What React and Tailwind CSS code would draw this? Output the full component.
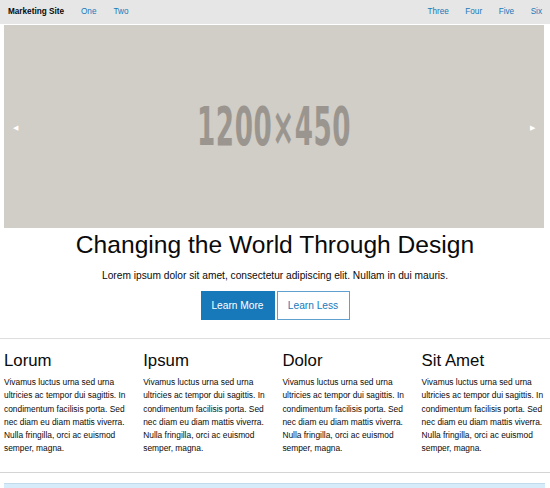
import React from 'react'

const leftLinks = ['One', 'Two']
const rightLinks = ['Three', 'Four', 'Five', 'Six']

const columns = ['Lorum', 'Ipsum', 'Dolor', 'Sit Amet']

const body =
  'Vivamus luctus urna sed urna ultricies ac tempor dui sagittis. In condimentum facilisis porta. Sed nec diam eu diam mattis viverra. Nulla fringilla, orci ac euismod semper, magna.'

const App = () => {
  return (
    <div className="w-full min-h-screen bg-white text-[#0a0a0a] font-['Liberation_Sans',Arial,sans-serif] overflow-hidden">
      {/* top bar */}
      <nav className="h-[24px] bg-[#e6e6e6] flex items-center justify-between px-[8px] text-[8.2px]">
        <div className="flex items-center gap-[17px]">
          <span className="font-bold">Marketing Site</span>
          {leftLinks.map((l) => (
            <a key={l} href="#" className="text-[#1779ba]">{l}</a>
          ))}
        </div>
        <div className="flex items-center gap-[16.5px]">
          {rightLinks.map((l) => (
            <a key={l} href="#" className="text-[#1779ba]">{l}</a>
          ))}
        </div>
      </nav>

      {/* orbit slider */}
      <div className="relative mt-px ml-[4px] mr-[6px] h-[203px] bg-[#d1cdc7] flex items-center justify-center">
        <span className="text-[53px] leading-none font-bold text-[#9a968f] scale-x-[0.55] font-['DejaVu_Sans_Condensed','DejaVu_Sans',sans-serif] [font-stretch:condensed] tracking-[1px]">
          1200×450
        </span>
        <span className="absolute left-[9px] top-[98px] text-white text-[7px]">◀</span>
        <span className="absolute right-[9px] top-[98px] text-white text-[7px]">▶</span>
      </div>

      {/* hero */}
      <div className="text-center pt-[2px]">
        <h1 className="text-[24.6px] leading-[29.5px]">Changing the World Through Design</h1>
        <p className="mt-[8px] text-[10.2px] leading-[16px]">
          Lorem ipsum dolor sit amet, consectetur adipiscing elit. Nullam in dui mauris.
        </p>
        <div className="mt-[7.5px] flex justify-center gap-[2px] text-[10.2px]">
          <a href="#" className="w-[74px] h-[29px] flex items-center justify-center bg-[#1779ba] text-white">
            Learn More
          </a>
          <a href="#" className="w-[73px] h-[29px] flex items-center justify-center border border-[#5fa0d0] text-[#1779ba]">
            Learn Less
          </a>
        </div>
      </div>

      <hr className="mt-[18px] border-t border-[#dedede]" />

      {/* columns */}
      <div className="grid grid-cols-[repeat(3,139.2px)_1fr] pl-[4px] pt-[12px]">
        {columns.map((c) => (
          <div key={c} className="w-[128px]">
            <h4 className="text-[16.8px] leading-[20px]">{c}</h4>
            <p className="mt-[5px] text-[8.4px] leading-[13.3px]">{body}</p>
          </div>
        ))}
      </div>

      <hr className="mt-[16.5px] border-t border-[#d4d4d4]" />

      {/* callout */}
      <div className="mt-[10px] ml-[4px] mr-[5px] h-[40px] bg-[#d7ecfa] border-t border-[#c3dcec]"></div>
    </div>
  )
}

export default App
